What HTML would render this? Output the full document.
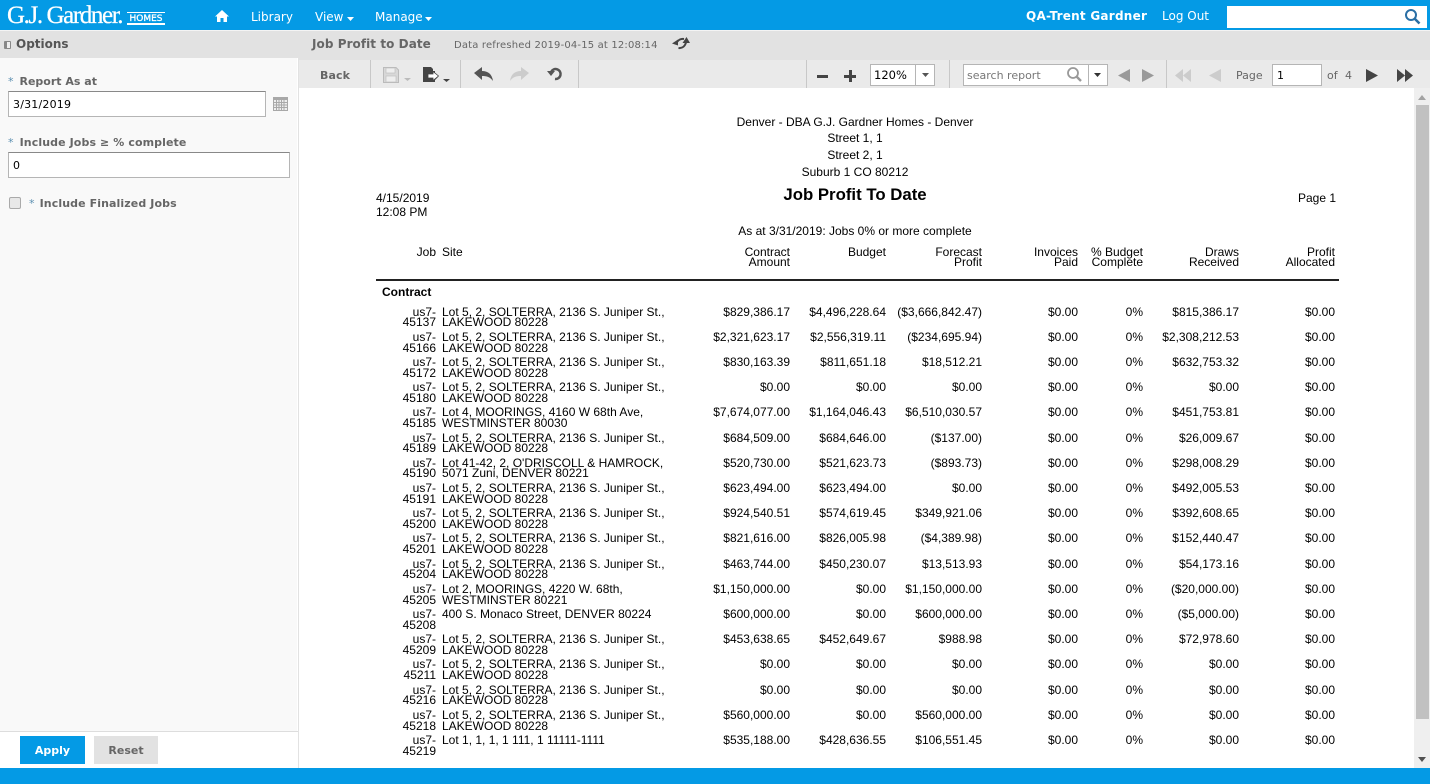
<!DOCTYPE html>
<html><head><meta charset="utf-8"><style>
html,body{margin:0;padding:0;width:1430px;height:784px;overflow:hidden;background:#fff}
*{box-sizing:border-box}
.a,.u,.t,.r span{position:absolute;white-space:nowrap}
.a{display:block}
.u{font:12px/14px "DejaVu Sans",sans-serif;color:#666}
.t{font:12px/14px "Liberation Sans",sans-serif;color:#000}
.b{font-weight:bold}
.l{font-size:11px;letter-spacing:.1px}
.l i{font-style:normal;font-weight:normal;color:#5b8fb0;margin-right:6px}
.inp{position:absolute;background:#fff;border:1px solid #b5b5b5;font:11px/20px "DejaVu Sans",sans-serif;color:#000;padding-left:4px}
.r{position:absolute;left:0;width:1430px;height:25px;font:12px/11px "Liberation Sans",sans-serif;color:#000}
.n{line-height:10px}
.r span{text-align:right;top:0}
.r .j{left:376px;width:60px}
.r .s{left:442px;text-align:left}
.r .c{left:690px;width:100px}
.r .d{left:786px;width:100px}
.r .e{left:882px;width:100px}
.r .f{left:978px;width:100px}
.r .g{left:1043px;width:100px}
.r .h{left:1139px;width:100px}
.r .i{left:1235px;width:100px}
</style></head><body>
<div class="a" style="left:0;top:0;width:1430px;height:30px;background:#049ae5"></div>
<div class="a" style="left:0;top:30px;width:1430px;height:1px;background:#f4f4f4"></div>
<div class="a" style="left:7px;top:2px;font:25px/28px 'Liberation Serif',serif;color:#fff;letter-spacing:-1.4px;white-space:nowrap;-webkit-text-stroke:.25px #fff">G.J. Gardner.</div>
<div class="a" style="left:127px;top:12px;width:38px;height:13px;border-top:1px solid #fff;border-bottom:2px solid #fff;padding-top:1px;font:9px/10px 'DejaVu Sans',sans-serif;color:#fff;text-align:center;-webkit-text-stroke:.3px #fff">HOMES</div>
<svg class="a" style="left:214px;top:9px" width="16" height="14" viewBox="0 0 16 14"><path d="M8 1 L15 7.5 H13 V13 H9.5 V9 H6.500 V13 H3 V7.500 H1 Z" fill="#fff"/></svg>
<div class="u" style="left:251px;top:10px;color:#fff">Library</div>
<div class="u" style="left:315px;top:10px;color:#fff">View</div>
<svg class="a" style="left:347px;top:17px" width="7" height="4"><path d="M0 0H7L3.500 4Z" fill="#fff"/></svg>
<div class="u" style="left:375px;top:10px;color:#fff">Manage</div>
<svg class="a" style="left:425px;top:17px" width="7" height="4"><path d="M0 0H7L3.500 4Z" fill="#fff"/></svg>
<div class="u b" style="left:1026px;top:9px;color:#fff;letter-spacing:.25px">QA-Trent Gardner</div>
<div class="u" style="left:1162px;top:9px;color:#fff">Log Out</div>
<div class="a" style="left:1227px;top:6px;width:200px;height:22px;background:#fff"></div>
<svg class="a" style="left:1404px;top:8px" width="17" height="17" viewBox="0 0 17 17"><circle cx="7" cy="7" r="5" fill="none" stroke="#2a6fa5" stroke-width="2"/><path d="M10.500 10.500L15.500 15.500" stroke="#2a6fa5" stroke-width="2.600"/></svg>

<div class="a" style="left:0;top:31px;width:298px;height:27px;background:#e2e2e2"></div>
<div class="a" style="left:4px;top:41px;width:7px;height:8px;border:1px solid #888;border-radius:1px;background:linear-gradient(90deg,#888 40%,#eee 40%)"></div>
<div class="u b" style="left:16px;top:37px;color:#555">Options</div>
<div class="a" style="left:0;top:58px;width:297px;height:673px;background:#f9f9f9"></div>
<div class="a" style="left:298px;top:31px;width:1px;height:737px;background:#e2e2e2"></div>
<div class="u b l" style="left:8px;top:75px;letter-spacing:0"><i>*</i>Report As at</div>
<div class="inp" style="left:8px;top:91px;width:258px;height:26px;line-height:25px;border-top-color:#888;letter-spacing:.2px">3/31/2019</div>
<svg class="a" style="left:273px;top:97px" width="15" height="14" viewBox="0 0 15 14"><rect width="15" height="14" fill="#a8a8a8"/><rect x="1" y="3" width="13" height="10" fill="#eee"/><path d="M1 5.500H14M1 8H14M1 10.500H14M3.500 3V13M6 3V13M8.500 3V13M11 3V13" stroke="#a8a8a8"/></svg>
<div class="u b l" style="left:8px;top:136px"><i>*</i>Include Jobs ≥ % complete</div>
<div class="inp" style="left:8px;top:152px;width:282px;height:26px;line-height:25px;border-top-color:#888">0</div>
<div class="a" style="left:9px;top:197px;width:12px;height:12px;border:1px solid #aaa;border-radius:2px;background:#e8e8e8"></div>
<div class="u b l" style="left:29px;top:197px"><i style="margin-right:5px">*</i>Include Finalized Jobs</div>
<div class="a" style="left:0;top:731px;width:298px;height:1px;background:#ddd"></div>
<div class="a" style="left:20px;top:736px;width:65px;height:28px;background:#049ae5;font:bold 11px/29px 'DejaVu Sans',sans-serif;color:#fff;text-align:center">Apply</div>
<div class="a" style="left:94px;top:736px;width:64px;height:28px;background:#e2e2e2;font:bold 11px/29px 'DejaVu Sans',sans-serif;color:#666;text-align:center">Reset</div>

<div class="a" style="left:299px;top:31px;width:1131px;height:29px;background:#e2e2e2"></div>
<div class="u b" style="left:312px;top:37px;letter-spacing:.06px">Job Profit to Date</div>
<div class="u" style="left:454px;top:39px;font-size:10px;letter-spacing:.17px">Data refreshed 2019-04-15 at 12:08:14</div>
<svg class="a" style="left:672px;top:37px" width="18" height="13" viewBox="0 0 18 13"><path d="M0 6.500L6 2.500V8.500Z" fill="#444"/><path d="M4.500 6C6 3 9 1.500 12 2" fill="none" stroke="#444" stroke-width="2"/><path d="M14.500 0L18 6H10.500Z" fill="#444"/><path d="M14 5.500C13 9 10.500 11.500 6.500 11" fill="none" stroke="#444" stroke-width="2"/></svg>
<div class="a" style="left:299px;top:60px;width:1131px;height:28px;background:#eaeaea"></div>
<div class="a" style="left:370px;top:60px;width:1px;height:28px;background:#c8c8c8"></div>
<div class="a" style="left:460px;top:60px;width:1px;height:28px;background:#c8c8c8"></div>
<div class="a" style="left:578px;top:60px;width:1px;height:28px;background:#c8c8c8"></div>
<div class="a" style="left:806px;top:60px;width:1px;height:28px;background:#c8c8c8"></div>
<div class="a" style="left:949px;top:60px;width:1px;height:28px;background:#c8c8c8"></div>
<div class="a" style="left:1166px;top:60px;width:1px;height:28px;background:#c8c8c8"></div>
<div class="u b l" style="left:320px;top:69px">Back</div>
<svg class="a" style="left:383px;top:67px" width="28" height="17" viewBox="0 0 28 17"><path d="M0.500 0.500H13L15.500 3V15.500H0.500Z" fill="#d8d8d8" stroke="#bbb"/><rect x="3" y="1" width="9" height="5" fill="#eee" stroke="#bbb" stroke-width=".6"/><rect x="3" y="9" width="10" height="6" fill="#eee" stroke="#bbb" stroke-width=".6"/><path d="M21 11H28L24.500 14Z" fill="#bbb"/></svg>
<svg class="a" style="left:423px;top:67px" width="28" height="17" viewBox="0 0 28 17"><path d="M0 0H8L10 2V4L12 4V7L15 9.500V10L12 13V15H0Z" fill="#444"/><path d="M5 7H10V4.500L15.500 9L10 13.500V11H5Z" fill="#fff" stroke="#444" stroke-width=".8"/><path d="M20 12H27L23.500 15Z" fill="#444"/></svg>
<svg class="a" style="left:474px;top:67px" width="20" height="15" viewBox="0 0 20 15"><path d="M0 6L8 0V4C14 4 18 7 19 14C16 10 13 9 8 9V13Z" fill="#555"/></svg>
<svg class="a" style="left:510px;top:67px" width="20" height="15" viewBox="0 0 20 15"><path d="M19 6L11 0V4C5 4 1 7 0 14C3 10 6 9 11 9V13Z" fill="#ccc"/></svg>
<svg class="a" style="left:547px;top:66px" width="16" height="16" viewBox="0 0 16 16"><path d="M4 6A5 5 0 1 1 8 13" fill="none" stroke="#555" stroke-width="2.500"/><path d="M0 5H8L4 10Z" fill="#555"/></svg>
<div class="a" style="left:817px;top:75px;width:11px;height:3px;background:#444"></div>
<div class="a" style="left:844px;top:75px;width:12px;height:3px;background:#444"></div>
<div class="a" style="left:849px;top:70px;width:3px;height:12px;background:#444"></div>
<div class="inp" style="left:870px;top:64px;width:65px;height:22px;font-size:11.500px;padding-left:3px"><span style="line-height:19px">120%</span></div>
<div class="a" style="left:915px;top:64px;width:1px;height:22px;background:#b5b5b5"></div>
<svg class="a" style="left:922px;top:73px" width="7" height="4"><path d="M0 0H7L3.500 4Z" fill="#555"/></svg>
<div class="inp" style="left:963px;top:64px;width:145px;height:22px;font-size:11px;color:#777;padding-left:3px;line-height:21px">search report</div>
<div class="a" style="left:1088px;top:64px;width:1px;height:22px;background:#b5b5b5"></div>
<svg class="a" style="left:1066px;top:66px" width="17" height="17" viewBox="0 0 17 17"><circle cx="7" cy="7" r="5" fill="none" stroke="#999" stroke-width="1.800"/><path d="M10.500 10.500L15 15" stroke="#999" stroke-width="2.400"/></svg>
<svg class="a" style="left:1094px;top:73px" width="7" height="4"><path d="M0 0H7L3.500 4Z" fill="#333"/></svg>
<svg class="a" style="left:1118px;top:69px" width="12" height="13"><path d="M12 0V13L0 6.500Z" fill="#999"/></svg>
<svg class="a" style="left:1142px;top:69px" width="12" height="13"><path d="M0 0V13L12 6.500Z" fill="#999"/></svg>
<svg class="a" style="left:1175px;top:69px" width="17" height="13"><path d="M8 0V13L0 6.500ZM16 0V13L8 6.500Z" fill="#ccc"/></svg>
<svg class="a" style="left:1209px;top:69px" width="12" height="13"><path d="M12 0V13L0 6.500Z" fill="#ccc"/></svg>
<div class="u" style="left:1236px;top:69px;font-size:11px">Page</div>
<div class="inp" style="left:1272px;top:64px;width:50px;height:22px;padding-left:4px;line-height:21px">1</div>
<div class="u" style="left:1327px;top:69px;font-size:11px">of</div>
<div class="u" style="left:1345px;top:69px;font-size:11px">4</div>
<svg class="a" style="left:1366px;top:69px" width="12" height="13"><path d="M0 0V13L12 6.500Z" fill="#444"/></svg>
<svg class="a" style="left:1397px;top:69px" width="16" height="13"><path d="M0 0V13L8 6.500ZM8 0V13L16 6.500Z" fill="#444"/></svg>

<div class="a" style="left:1414px;top:88px;width:16px;height:680px;background:#efefef"></div>
<div class="a" style="left:1416px;top:105px;width:13px;height:614px;background:#c1c1c1"></div>
<svg class="a" style="left:1418px;top:95px" width="8" height="5"><path d="M0 5H8L4 0Z" fill="#a3a3a3"/></svg>
<svg class="a" style="left:1418px;top:757px" width="8" height="5"><path d="M0 0H8L4 5Z" fill="#505050"/></svg>
<div class="a" style="left:0;top:768px;width:1430px;height:16px;background:#049ae5"></div>

<div class="t" style="left:655px;width:400px;text-align:center;top:115px">Denver - DBA G.J. Gardner Homes - Denver</div>
<div class="t" style="left:655px;width:400px;text-align:center;top:131px">Street 1, 1</div>
<div class="t" style="left:655px;width:400px;text-align:center;top:148px">Street 2, 1</div>
<div class="t" style="left:655px;width:400px;text-align:center;top:165px">Suburb 1 CO 80212</div>
<div class="t b" style="left:655px;width:400px;text-align:center;top:186px;font-size:16.800px;line-height:18px">Job Profit To Date</div>
<div class="t" style="left:376px;top:191px">4/15/2019</div>
<div class="t" style="left:376px;top:205px">12:08 PM</div>
<div class="t" style="left:1298px;top:191px">Page 1</div>
<div class="t" style="left:655px;width:400px;text-align:center;top:224px">As at 3/31/2019: Jobs 0% or more complete</div>

<div class="r n" style="top:247px">
<span class="j">Job</span><span class="s">Site</span><span class="c">Contract<br>Amount</span><span class="d">Budget</span><span class="e">Forecast<br>Profit</span><span class="f">Invoices<br>Paid</span><span class="g">% Budget<br>Complete</span><span class="h">Draws<br>Received</span><span class="i">Profit<br>Allocated</span>
</div>
<div class="a" style="left:376px;top:279px;width:963px;height:2px;background:#222"></div>
<div class="t b" style="left:382px;top:285px">Contract</div>

<div class="r n" style="top:307px"><span class="j">us7-<br>45137</span><span class="s">Lot 5, 2, SOLTERRA, 2136 S. Juniper St.,<br>LAKEWOOD 80228</span><span class="c">$829,386.17</span><span class="d">$4,496,228.64</span><span class="e">($3,666,842.47)</span><span class="f">$0.00</span><span class="g">0%</span><span class="h">$815,386.17</span><span class="i">$0.00</span></div>
<div class="r" style="top:332px"><span class="j">us7-<br>45166</span><span class="s">Lot 5, 2, SOLTERRA, 2136 S. Juniper St.,<br>LAKEWOOD 80228</span><span class="c">$2,321,623.17</span><span class="d">$2,556,319.11</span><span class="e">($234,695.94)</span><span class="f">$0.00</span><span class="g">0%</span><span class="h">$2,308,212.53</span><span class="i">$0.00</span></div>
<div class="r" style="top:357px"><span class="j">us7-<br>45172</span><span class="s">Lot 5, 2, SOLTERRA, 2136 S. Juniper St.,<br>LAKEWOOD 80228</span><span class="c">$830,163.39</span><span class="d">$811,651.18</span><span class="e">$18,512.21</span><span class="f">$0.00</span><span class="g">0%</span><span class="h">$632,753.32</span><span class="i">$0.00</span></div>
<div class="r" style="top:382px"><span class="j">us7-<br>45180</span><span class="s">Lot 5, 2, SOLTERRA, 2136 S. Juniper St.,<br>LAKEWOOD 80228</span><span class="c">$0.00</span><span class="d">$0.00</span><span class="e">$0.00</span><span class="f">$0.00</span><span class="g">0%</span><span class="h">$0.00</span><span class="i">$0.00</span></div>
<div class="r" style="top:407px"><span class="j">us7-<br>45185</span><span class="s">Lot 4, MOORINGS, 4160 W 68th Ave,<br>WESTMINSTER 80030</span><span class="c">$7,674,077.00</span><span class="d">$1,164,046.43</span><span class="e">$6,510,030.57</span><span class="f">$0.00</span><span class="g">0%</span><span class="h">$451,753.81</span><span class="i">$0.00</span></div>
<div class="r n" style="top:433px"><span class="j">us7-<br>45189</span><span class="s">Lot 5, 2, SOLTERRA, 2136 S. Juniper St.,<br>LAKEWOOD 80228</span><span class="c">$684,509.00</span><span class="d">$684,646.00</span><span class="e">($137.00)</span><span class="f">$0.00</span><span class="g">0%</span><span class="h">$26,009.67</span><span class="i">$0.00</span></div>
<div class="r n" style="top:458px"><span class="j">us7-<br>45190</span><span class="s">Lot 41-42, 2, O'DRISCOLL &amp; HAMROCK,<br>5071 Zuni, DENVER 80221</span><span class="c">$520,730.00</span><span class="d">$521,623.73</span><span class="e">($893.73)</span><span class="f">$0.00</span><span class="g">0%</span><span class="h">$298,008.29</span><span class="i">$0.00</span></div>
<div class="r" style="top:483px"><span class="j">us7-<br>45191</span><span class="s">Lot 5, 2, SOLTERRA, 2136 S. Juniper St.,<br>LAKEWOOD 80228</span><span class="c">$623,494.00</span><span class="d">$623,494.00</span><span class="e">$0.00</span><span class="f">$0.00</span><span class="g">0%</span><span class="h">$492,005.53</span><span class="i">$0.00</span></div>
<div class="r" style="top:508px"><span class="j">us7-<br>45200</span><span class="s">Lot 5, 2, SOLTERRA, 2136 S. Juniper St.,<br>LAKEWOOD 80228</span><span class="c">$924,540.51</span><span class="d">$574,619.45</span><span class="e">$349,921.06</span><span class="f">$0.00</span><span class="g">0%</span><span class="h">$392,608.65</span><span class="i">$0.00</span></div>
<div class="r" style="top:533px"><span class="j">us7-<br>45201</span><span class="s">Lot 5, 2, SOLTERRA, 2136 S. Juniper St.,<br>LAKEWOOD 80228</span><span class="c">$821,616.00</span><span class="d">$826,005.98</span><span class="e">($4,389.98)</span><span class="f">$0.00</span><span class="g">0%</span><span class="h">$152,440.47</span><span class="i">$0.00</span></div>
<div class="r n" style="top:559px"><span class="j">us7-<br>45204</span><span class="s">Lot 5, 2, SOLTERRA, 2136 S. Juniper St.,<br>LAKEWOOD 80228</span><span class="c">$463,744.00</span><span class="d">$450,230.07</span><span class="e">$13,513.93</span><span class="f">$0.00</span><span class="g">0%</span><span class="h">$54,173.16</span><span class="i">$0.00</span></div>
<div class="r" style="top:584px"><span class="j">us7-<br>45205</span><span class="s">Lot 2, MOORINGS, 4220 W. 68th,<br>WESTMINSTER 80221</span><span class="c">$1,150,000.00</span><span class="d">$0.00</span><span class="e">$1,150,000.00</span><span class="f">$0.00</span><span class="g">0%</span><span class="h">($20,000.00)</span><span class="i">$0.00</span></div>
<div class="r" style="top:609px"><span class="j">us7-<br>45208</span><span class="s">400 S. Monaco Street, DENVER 80224</span><span class="c">$600,000.00</span><span class="d">$0.00</span><span class="e">$600,000.00</span><span class="f">$0.00</span><span class="g">0%</span><span class="h">($5,000.00)</span><span class="i">$0.00</span></div>
<div class="r" style="top:634px"><span class="j">us7-<br>45209</span><span class="s">Lot 5, 2, SOLTERRA, 2136 S. Juniper St.,<br>LAKEWOOD 80228</span><span class="c">$453,638.65</span><span class="d">$452,649.67</span><span class="e">$988.98</span><span class="f">$0.00</span><span class="g">0%</span><span class="h">$72,978.60</span><span class="i">$0.00</span></div>
<div class="r" style="top:659px"><span class="j">us7-<br>45211</span><span class="s">Lot 5, 2, SOLTERRA, 2136 S. Juniper St.,<br>LAKEWOOD 80228</span><span class="c">$0.00</span><span class="d">$0.00</span><span class="e">$0.00</span><span class="f">$0.00</span><span class="g">0%</span><span class="h">$0.00</span><span class="i">$0.00</span></div>
<div class="r n" style="top:685px"><span class="j">us7-<br>45216</span><span class="s">Lot 5, 2, SOLTERRA, 2136 S. Juniper St.,<br>LAKEWOOD 80228</span><span class="c">$0.00</span><span class="d">$0.00</span><span class="e">$0.00</span><span class="f">$0.00</span><span class="g">0%</span><span class="h">$0.00</span><span class="i">$0.00</span></div>
<div class="r" style="top:710px"><span class="j">us7-<br>45218</span><span class="s">Lot 5, 2, SOLTERRA, 2136 S. Juniper St.,<br>LAKEWOOD 80228</span><span class="c">$560,000.00</span><span class="d">$0.00</span><span class="e">$560,000.00</span><span class="f">$0.00</span><span class="g">0%</span><span class="h">$0.00</span><span class="i">$0.00</span></div>
<div class="r" style="top:735px"><span class="j">us7-<br>45219</span><span class="s">Lot 1, 1, 1, 1 111, 1 11111-1111</span><span class="c">$535,188.00</span><span class="d">$428,636.55</span><span class="e">$106,551.45</span><span class="f">$0.00</span><span class="g">0%</span><span class="h">$0.00</span><span class="i">$0.00</span></div>
</body></html>
